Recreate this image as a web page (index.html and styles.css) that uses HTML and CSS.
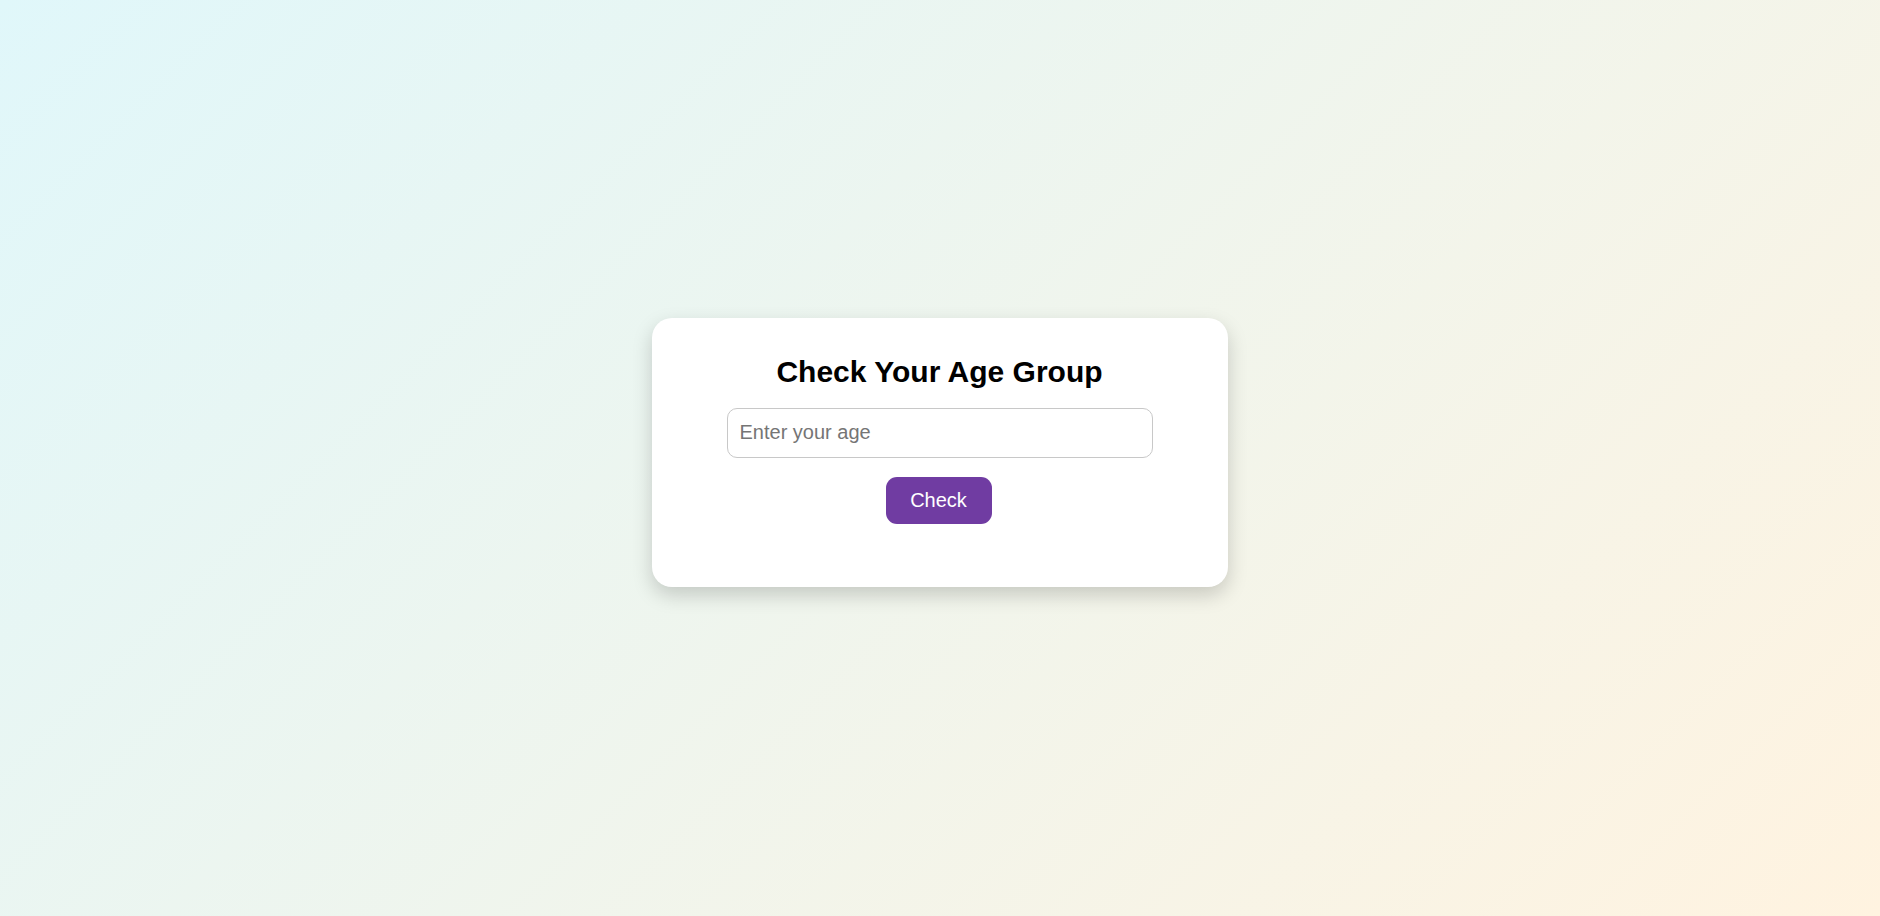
FILE: index.html
```html
<!DOCTYPE html>
<html lang="en">
<head>
<meta charset="utf-8">
<title>Check Your Age Group</title>
<link rel="stylesheet" href="styles.css">
</head>
<body>
  <main class="card">
    <h2 class="title">Check Your Age Group</h2>
    <input class="age-input" type="number" placeholder="Enter your age">
    <button class="check-btn" type="button">Check</button>
  </main>
</body>
</html>
```

FILE: styles.css
```css
html, body {
  margin: 0;
  padding: 0;
}

body {
  height: 100vh;
  display: flex;
  align-items: center;
  justify-content: center;
  background: linear-gradient(135deg, #e0f7fa, #fff3e0);
  font-family: "Liberation Sans", Arial, sans-serif;
}

.card {
  box-sizing: border-box;
  width: 576px;
  height: 269px;
  margin: 0 1px 11px 0;
  padding: 37px 30px 0;
  background: #ffffff;
  border-radius: 20px;
  box-shadow: 0 8px 20px rgba(0, 0, 0, 0.18);
  display: flex;
  flex-direction: column;
  align-items: center;
}

.title {
  margin: 0 0 18px;
  font-size: 30px;
  font-weight: bold;
  color: #000;
  line-height: 34.5px;
}

.age-input {
  box-sizing: border-box;
  width: 426px;
  height: 50px;
  padding: 0 12px;
  font-family: "Liberation Sans", Arial, sans-serif;
  font-size: 20px;
  color: #000;
  border: 1px solid #c8c8c8;
  border-radius: 10px;
  background: #fff;
  outline: none;
  margin: 0 0 19px;
}

.age-input::placeholder {
  color: #757575;
}

.age-input::-webkit-outer-spin-button,
.age-input::-webkit-inner-spin-button {
  -webkit-appearance: none;
  margin: 0;
}

.check-btn {
  box-sizing: border-box;
  height: 47px;
  width: 106px;
  margin-right: 2px;
  padding: 0;
  border: none;
  border-radius: 11px;
  background: #703ca2;
  color: #fff;
  font-family: "Liberation Sans", Arial, sans-serif;
  font-size: 20px;
  cursor: pointer;
}
```
